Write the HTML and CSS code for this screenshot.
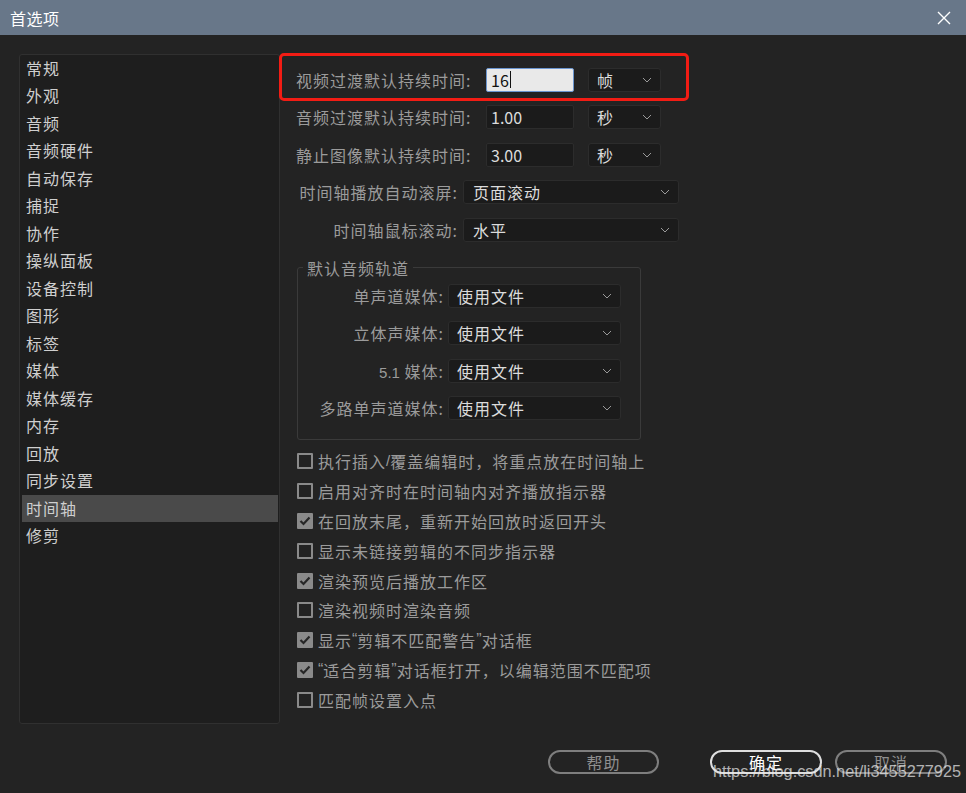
FILE: index.html
```html
<!DOCTYPE html>
<html lang="zh">
<head>
<meta charset="utf-8">
<title>首选项</title>
<link rel="stylesheet" href="styles.css">
</head>
<body>
<div class="titlebar">
  <span class="title">首选项</span>
  <svg class="close" width="14" height="14" viewBox="0 0 14 14"><path d="M1 1L13 13M13 1L1 13" stroke="#fff" stroke-width="1.4" fill="none"/></svg>
</div>
<div class="main">
  <ul class="nav">
    <li>常规</li><li>外观</li><li>音频</li><li>音频硬件</li><li>自动保存</li><li>捕捉</li><li>协作</li><li>操纵面板</li><li>设备控制</li><li>图形</li><li>标签</li><li>媒体</li><li>媒体缓存</li><li>内存</li><li>回放</li><li>同步设置</li><li class="sel">时间轴</li><li>修剪</li>
  </ul>
  <div class="content">
    <div class="row">
      <span class="lbl w1">视频过渡默认持续时间:</span>
      <span class="num active">16<i class="caret"></i></span>
      <span class="dd unit">帧<svg class="chev" width="10" height="6" viewBox="0 0 10 6"><path d="M1 1L5 5L9 1" stroke="#9a9a9a" fill="none"/></svg></span>
    </div>
    <div class="row">
      <span class="lbl w1">音频过渡默认持续时间:</span>
      <span class="num">1.00</span>
      <span class="dd unit">秒<svg class="chev" width="10" height="6" viewBox="0 0 10 6"><path d="M1 1L5 5L9 1" stroke="#9a9a9a" fill="none"/></svg></span>
    </div>
    <div class="row">
      <span class="lbl w1">静止图像默认持续时间:</span>
      <span class="num">3.00</span>
      <span class="dd unit">秒<svg class="chev" width="10" height="6" viewBox="0 0 10 6"><path d="M1 1L5 5L9 1" stroke="#9a9a9a" fill="none"/></svg></span>
    </div>
    <div class="row">
      <span class="lbl w2">时间轴播放自动滚屏:</span>
      <span class="dd wide">页面滚动<svg class="chev" width="10" height="6" viewBox="0 0 10 6"><path d="M1 1L5 5L9 1" stroke="#9a9a9a" fill="none"/></svg></span>
    </div>
    <div class="row">
      <span class="lbl w2">时间轴鼠标滚动:</span>
      <span class="dd wide">水平<svg class="chev" width="10" height="6" viewBox="0 0 10 6"><path d="M1 1L5 5L9 1" stroke="#9a9a9a" fill="none"/></svg></span>
    </div>
    <fieldset class="group">
      <legend>默认音频轨道</legend>
      <div class="grow">
        <span class="lbl w3">单声道媒体:</span>
        <span class="dd mid">使用文件<svg class="chev" width="10" height="6" viewBox="0 0 10 6"><path d="M1 1L5 5L9 1" stroke="#9a9a9a" fill="none"/></svg></span>
      </div>
      <div class="grow">
        <span class="lbl w3">立体声媒体:</span>
        <span class="dd mid">使用文件<svg class="chev" width="10" height="6" viewBox="0 0 10 6"><path d="M1 1L5 5L9 1" stroke="#9a9a9a" fill="none"/></svg></span>
      </div>
      <div class="grow">
        <span class="lbl w3"><span class="lat">5.1</span> 媒体:</span>
        <span class="dd mid">使用文件<svg class="chev" width="10" height="6" viewBox="0 0 10 6"><path d="M1 1L5 5L9 1" stroke="#9a9a9a" fill="none"/></svg></span>
      </div>
      <div class="grow">
        <span class="lbl w3">多路单声道媒体:</span>
        <span class="dd mid">使用文件<svg class="chev" width="10" height="6" viewBox="0 0 10 6"><path d="M1 1L5 5L9 1" stroke="#9a9a9a" fill="none"/></svg></span>
      </div>
    </fieldset>
    <ul class="checks">
      <li><span class="cb"></span>执行插入<span class="lat">/</span>覆盖编辑时，将重点放在时间轴上</li>
      <li><span class="cb"></span>启用对齐时在时间轴内对齐播放指示器</li>
      <li><span class="cb on"><svg width="12" height="10" viewBox="0 0 12 10"><path d="M1.5 5L4.5 8L10.5 1.5" stroke="#262626" stroke-width="2.2" fill="none"/></svg></span>在回放末尾，重新开始回放时返回开头</li>
      <li><span class="cb"></span>显示未链接剪辑的不同步指示器</li>
      <li><span class="cb on"><svg width="12" height="10" viewBox="0 0 12 10"><path d="M1.5 5L4.5 8L10.5 1.5" stroke="#262626" stroke-width="2.2" fill="none"/></svg></span>渲染预览后播放工作区</li>
      <li><span class="cb"></span>渲染视频时渲染音频</li>
      <li><span class="cb on"><svg width="12" height="10" viewBox="0 0 12 10"><path d="M1.5 5L4.5 8L10.5 1.5" stroke="#262626" stroke-width="2.2" fill="none"/></svg></span>显示<span class="q">“</span>剪辑不匹配警告<span class="q">”</span>对话框</li>
      <li><span class="cb on"><svg width="12" height="10" viewBox="0 0 12 10"><path d="M1.5 5L4.5 8L10.5 1.5" stroke="#262626" stroke-width="2.2" fill="none"/></svg></span><span class="q">“</span>适合剪辑<span class="q">”</span>对话框打开，以编辑范围不匹配项</li>
      <li><span class="cb"></span>匹配帧设置入点</li>
    </ul>
  </div>
</div>
<div class="footer">
  <span class="btn help">帮助</span>
  <span class="btn ok">确定</span>
  <span class="btn cancel">取消</span>
</div>
<div class="highlight"></div>
<div class="watermark">https://blog.csdn.net/li3455277925</div>
</body>
</html>
```
FILE: styles.css
```css
* { box-sizing: border-box; }
html, body { margin: 0; padding: 0; }
body {
  width: 966px;
  height: 793px;
  background: #232323;
  font-family: "Noto Sans CJK SC", "Microsoft YaHei", sans-serif;
  font-size: 16px;
  color: #9b9b9b;
  position: relative;
  overflow: hidden;
}
.titlebar {
  height: 35px;
  background: #687789;
  display: flex;
  align-items: center;
  justify-content: space-between;
  padding: 0 15px 0 10px;
}
.title { color: #fff; font-size: 16px; letter-spacing: 0.5px; }
.close { display: block; }
.main {
  display: flex;
  padding: 19px 0 0 19px;
}
.nav {
  list-style: none;
  margin: 0;
  padding: 0;
  width: 261px;
  height: 670px;
  background: #1e1e1e;
  border: 1px solid #303030;
  border-radius: 3px;
}
.nav li {
  height: 27.47px;
  line-height: 27.47px;
  margin: 0 1px 0 2px;
  padding-left: 4px;
  color: #cfcfcf;
  letter-spacing: 1px;
}
.nav li.sel { background: #4a4a4a; }
.content {
  padding: 13px 0 0 16px;
  display: flex;
  flex-direction: column;
}
.row {
  display: flex;
  align-items: center;
  height: 25px;
  margin-bottom: 12.5px;
}
.lbl {
  text-align: right;
  letter-spacing: 1px;
  white-space: nowrap;
  color: #9b9b9b;
}
.w1 { width: 186px; margin-right: 4px; text-align: left; }
.w2 { width: 162px; margin-right: 5px; }
.w3 { width: 146px; margin-right: 4px; }
.lat { font-family: "Liberation Sans", sans-serif; font-size: 15px; letter-spacing: 0; }
.q { font-family: "Liberation Sans", sans-serif; letter-spacing: 0; }
.num {
  width: 88px;
  height: 24px;
  background: #1b1b1b;
  border: 1px solid #2c2c2c;
  border-radius: 2px;
  color: #dcdcdc;
  padding-left: 4px;
  line-height: 22px;
  display: flex;
  align-items: center;
}
.num.active {
  background: #e9e9e9;
  border: 1px solid #6b95cf;
  color: #111;
}
.caret {
  display: inline-block;
  width: 1px;
  height: 17px;
  background: #111;
  margin-left: 1px;
}
.dd {
  height: 24px;
  background: #1b1b1b;
  border: 1px solid #2c2c2c;
  border-radius: 3px;
  color: #dcdcdc;
  display: flex;
  align-items: center;
  justify-content: space-between;
  letter-spacing: 1px;
}
.dd.unit { width: 73px; margin-left: 14px; padding: 0 8px 0 8px; }
.dd.wide { width: 216px; padding: 0 8px 0 9px; }
.dd.mid { width: 173px; padding: 0 8px 0 8px; }
.chev { display: block; flex: none; }
.group {
  margin: 2px 0 0 1px;
  width: 344px;
  border: 1px solid #3a3a3a;
  border-radius: 3px;
  padding: 5px 0 19px 0;
  min-width: 0;
}
.group legend {
  margin-left: 5px;
  padding: 0 4px;
  line-height: 22px;
  letter-spacing: 1px;
  color: #9b9b9b;
}
.grow {
  display: flex;
  align-items: center;
  height: 24px;
  margin-bottom: 13.5px;
}
.grow:last-child { margin-bottom: 0; }
.checks {
  list-style: none;
  margin: 6px 0 0 0;
  padding: 0 0 0 1px;
}
.checks li {
  height: 29.9px;
  display: flex;
  align-items: center;
  letter-spacing: 1px;
  color: #9b9b9b;
  white-space: nowrap;
}
.cb {
  width: 16px;
  height: 16px;
  border: 2px solid #8a8a8a;
  border-radius: 1px;
  margin-right: 5px;
  flex: none;
  display: flex;
  align-items: center;
  justify-content: center;
}
.cb.on { background: #8a8a8a; }
.cb svg { display: block; }
.footer {
  display: flex;
  justify-content: flex-end;
  padding: 26px 19px 0 0;
}
.btn {
  width: 112px;
  height: 24px;
  border: 2px solid #7e7e7e;
  border-radius: 12px;
  display: flex;
  align-items: center;
  justify-content: center;
  color: #8f8f8f;
  letter-spacing: 1px;
}
.btn.help { width: 111px; margin-right: 51px; }
.btn.ok { border-color: #dedede; color: #fff; margin-right: 13px; }
.highlight {
  position: absolute;
  left: 279px;
  top: 53px;
  width: 410px;
  height: 48px;
  border: 3px solid #f21c14;
  border-radius: 5px;
}
.watermark {
  position: absolute;
  left: 713px;
  top: 762px;
  font-family: "Liberation Sans", Arial, sans-serif;
  font-size: 16.3px;
  letter-spacing: 0;
  color: rgba(235, 235, 235, 0.72);
  white-space: nowrap;
}
```
